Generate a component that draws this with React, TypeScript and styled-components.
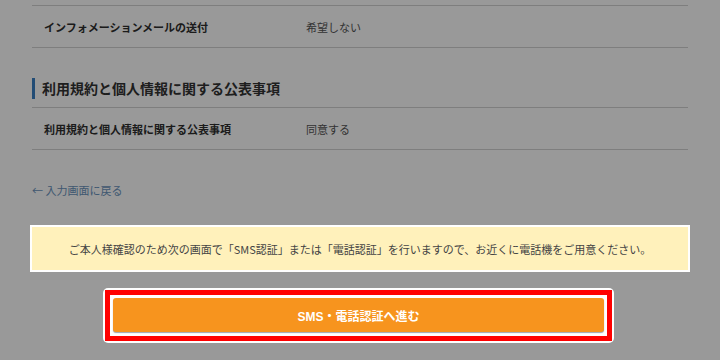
import React from 'react'
import styled, { createGlobalStyle } from 'styled-components'

const GlobalStyle = createGlobalStyle`
  html, body {
    margin: 0;
    padding: 0;
    background: #ffffff;
  }
  body {
    font-family: "Noto Sans CJK JP", "Noto Sans", sans-serif;
    color: #333333;
  }
`

const Page = styled.div`
  position: relative;
  width: 720px;
  height: 360px;
  overflow: hidden;
  background: #ffffff;
`

const Container = styled.div`
  padding: 5px 32px 0;
`

// dims everything except the highlighted notice and button
const Overlay = styled.div`
  position: absolute;
  inset: 0;
  background: rgba(0, 0, 0, 0.4);
  z-index: 1;
`

const List = styled.dl`
  margin: 0;
  border-top: 1px solid #d2d2d2;
`

const Row = styled.div`
  display: grid;
  grid-template-columns: 274px 1fr;
  align-items: center;
  height: 41px;
  border-bottom: 1px solid #d2d2d2;
`

const Label = styled.dt`
  padding-left: 12px;
  font-size: 11px;
  font-weight: 700;
  color: #2e2e2e;
`

const Value = styled.dd`
  margin: 0;
  font-size: 11px;
  color: #555555;
`

const Heading = styled.h2`
  margin: 30px 0 8px;
  height: 21px;
  line-height: 21px;
  padding-left: 7px;
  border-left: 3px solid #3a7fc4;
  font-size: 14px;
  font-weight: 700;
  color: #333333;
`

const BackLink = styled.a`
  display: block;
  margin-top: 33px;
  line-height: 14px;
  font-size: 11px;
  color: #6a93bd;
  text-decoration: none;
`

const Notice = styled.p`
  position: relative;
  z-index: 2;
  margin: 30px 0 0;
  height: 43px;
  display: flex;
  align-items: center;
  justify-content: center;
  background: #fff1bb;
  outline: 2px solid #ffffff;
  font-size: 11px;
  color: #444444;
`

const ButtonRow = styled.div`
  position: relative;
  z-index: 2;
  display: flex;
  justify-content: center;
  margin-top: 18px;
  padding-right: 3px;
`

const Highlight = styled.div`
  padding: 2px;
  background: #ffffff;
  border-radius: 5px;
`

const Frame = styled.div`
  padding: 3px 3px 4px;
  background: #ffffff;
  border: 5px solid #ff0000;
`

const SubmitButton = styled.button`
  display: block;
  width: 491px;
  height: 34px;
  border: none;
  border-radius: 3px;
  background: #f7941e;
  box-shadow: 0 1px 1px rgba(80, 90, 110, 0.55);
  color: #ffffff;
  font-family: "Liberation Sans", "Noto Sans CJK JP", sans-serif;
  font-size: 12px;
  font-weight: 700;
  cursor: pointer;
`

const App = (): React.ReactElement => {
  return (
    <Page>
      <GlobalStyle />
      <Container>
        <List>
          <Row>
            <Label>インフォメーションメールの送付</Label>
            <Value>希望しない</Value>
          </Row>
        </List>
        <Heading>利用規約と個人情報に関する公表事項</Heading>
        <List>
          <Row>
            <Label>利用規約と個人情報に関する公表事項</Label>
            <Value>同意する</Value>
          </Row>
        </List>
        <BackLink href="#">← 入力画面に戻る</BackLink>
        <Notice>
          ご本人様確認のため次の画面で「SMS認証」または「電話認証」を行いますので、お近くに電話機をご用意ください。
        </Notice>
        <ButtonRow>
          <Highlight>
            <Frame>
              <SubmitButton type="button">SMS・電話認証へ進む</SubmitButton>
            </Frame>
          </Highlight>
        </ButtonRow>
      </Container>
      <Overlay />
    </Page>
  )
}

export default App
